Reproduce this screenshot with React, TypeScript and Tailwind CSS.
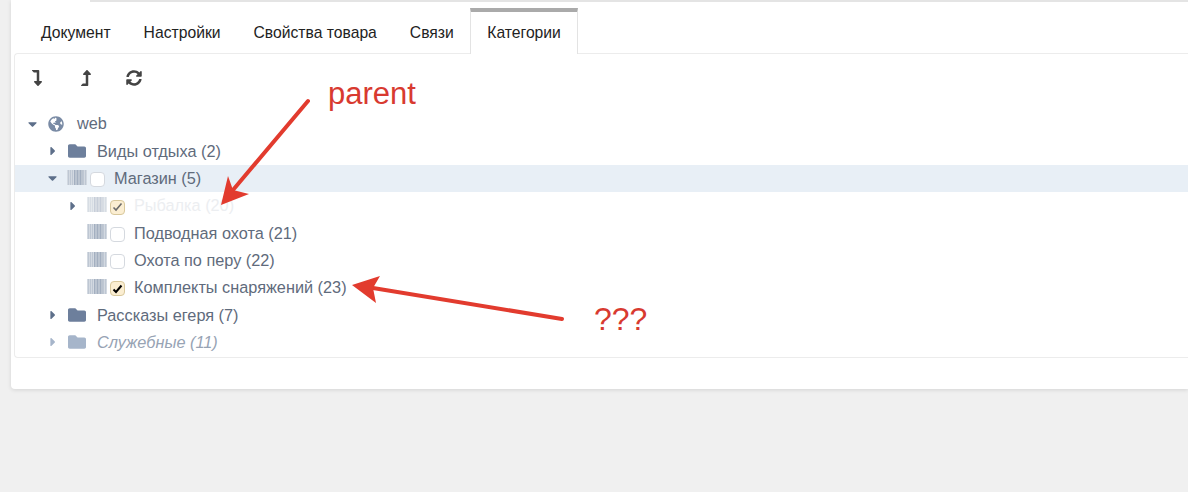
import React from "react";
import {
  FaCaretDown,
  FaCaretRight,
  FaFolder,
  FaGlobeAmericas,
  FaLevelDownAlt,
  FaLevelUpAlt,
  FaSyncAlt,
} from "react-icons/fa";

const tabs = ["Документ", "Настройки", "Свойства товара", "Связи", "Категории"];

const Barcode: React.FC<{ faded?: boolean }> = ({ faded }) => (
  <svg width="20" height="15" viewBox="0 0 20 15" className={`-mt-[2px] shrink-0 ${faded ? "opacity-60" : ""}`}>
    <rect width="20" height="15" fill="#d3d9e1" />
    {[1, 3, 5, 7, 8.5, 10, 11.5, 13, 14.5, 16, 18].map((x, i) => (
      <rect key={i} x={x} width="1" height="15" fill={i > 2 && i < 9 ? "#a3afc0" : "#bec7d3"} />
    ))}
  </svg>
);

const Check: React.FC<{ checked?: boolean; faded?: boolean }> = ({ checked, faded }) => (
  <span
    className={`mt-[3px] flex h-[15px] w-[15px] shrink-0 items-center justify-center rounded-[4px] border ${
      checked ? "border-[#d8c89c] bg-[#fbeed2]" : "border-[#d5d9df] bg-white"
    }`}
  >
    {checked && (
      <svg width="11" height="10" viewBox="0 0 11 10">
        <path
          d="M1.5 5.5 4 8l5.5-6.5"
          fill="none"
          stroke={faded ? "#6b6b6b" : "#000"}
          strokeWidth={faded ? 1.6 : 2}
        />
      </svg>
    )}
  </span>
);

const Row: React.FC<{ pl: string; className?: string; children: React.ReactNode }> = ({ pl, className, children }) => (
  <div className={`flex h-[27.3px] items-center ${pl} ${className ?? ""}`}>{children}</div>
);

const FolderRow: React.FC<{ label: string; muted?: boolean }> = ({ label, muted }) => (
  <Row pl="pl-[34px]">
    <FaCaretRight className={`w-[8px] shrink-0 text-[14px] ${muted ? "text-[#a6b5ca]" : "text-[#5d6f8a]"}`} />
    <FaFolder className={`ml-[11px] shrink-0 text-[18px] ${muted ? "text-[#a6b5ca]" : "text-[#6d7f9c]"}`} />
    <span className={`ml-[11px] ${muted ? "italic text-[#97a3b4]" : ""}`}>{label}</span>
  </Row>
);

const CategoryRow: React.FC<{ label: string; checked?: boolean }> = ({ label, checked }) => (
  <Row pl="pl-[72px]">
    <Barcode />
    <span className="ml-[3px]">
      <Check checked={checked} />
    </span>
    <span className="ml-[9px]">{label}</span>
  </Row>
);

export default function App() {
  return (
    <div className="relative h-[492px] w-[1188px] overflow-hidden bg-[#f0f0f0] font-['Liberation_Sans',Arial,sans-serif] text-[16.3px]">
      <div className="ml-[11px] h-[389px] rounded-bl-[4px] bg-white shadow-[0_1px_4px_rgba(0,0,0,0.12)]">
        <div className="ml-[79px] h-[2px] bg-[#e4e4e4]" />

        {/* tabs */}
        <div className="flex h-[51px] items-end pl-[13.5px] text-[15.7px] text-[#222]">
          {tabs.map((tab) =>
            tab === "Категории" ? (
              <div
                key={tab}
                className="relative -mb-px flex h-[46px] items-center border-x border-x-[#e3e3e3] border-t-4 border-t-[#aaaaaa] bg-white px-4 pb-[1px]"
              >
                {tab}
              </div>
            ) : (
              <div key={tab} className="flex h-[45px] items-center px-[16.5px] pt-[5px]">
                {tab}
              </div>
            ),
          )}
        </div>

        {/* panel */}
        <div className="ml-[3px] h-[305px] rounded-l-[4px] border-y border-l border-[#ececec] text-[#5f6b7c]">
          <div className="flex h-[56px] items-start pt-[16px] text-[#444]">
            <FaLevelDownAlt className="ml-[14px] text-[16px]" />
            <FaLevelUpAlt className="ml-[33px] text-[16px]" />
            <FaSyncAlt className="ml-[32px] text-[16px]" />
          </div>

          <Row pl="pl-[12px]">
            <FaCaretDown className="w-[11px] shrink-0 text-[14px] text-[#5d6f8a]" />
            <FaGlobeAmericas className="ml-[10px] shrink-0 text-[16px] text-[#7a8ba5]" />
            <span className="ml-[13px]">web</span>
          </Row>
          <FolderRow label="Виды отдыха (2)" />
          <Row pl="pl-[32px]" className="bg-[#e8eff6]">
            <FaCaretDown className="w-[11px] shrink-0 text-[14px] text-[#5d6f8a]" />
            <span className="ml-[9px]">
              <Barcode />
            </span>
            <span className="ml-[3px]">
              <Check />
            </span>
            <span className="ml-[9px]">Магазин (5)</span>
          </Row>
          <Row pl="pl-[54px]">
            <FaCaretRight className="w-[8px] shrink-0 text-[14px] text-[#5d6f8a]" />
            <span className="ml-[10px]">
              <Barcode faded />
            </span>
            <span className="ml-[3px]">
              <Check checked faded />
            </span>
            <span className="ml-[9px] text-[#eceef1]">Рыбалка (20)</span>
          </Row>
          <CategoryRow label="Подводная охота (21)" />
          <CategoryRow label="Охота по перу (22)" />
          <CategoryRow label="Комплекты снаряжений (23)" checked />
          <FolderRow label="Рассказы егеря (7)" />
          <FolderRow label="Служебные (11)" muted />
        </div>
      </div>

      {/* annotations drawn over the screenshot */}
      <span className="absolute left-[328px] top-[76px] text-[31px] leading-[36px] text-[#d83a30]">parent</span>
      <span className="absolute left-[594px] top-[301px] text-[32px] leading-[36px] text-[#d83a30]">???</span>
      <svg className="absolute left-0 top-0" width="1188" height="492" viewBox="0 0 1188 492">
        <path d="M308 101 233 190" stroke="#e23b2e" strokeWidth="4" strokeLinecap="round" />
        <path d="M221 205 228 176 233 190 249 194Z" fill="#e23b2e" />
        <path d="M562 319 373 288" stroke="#e23b2e" strokeWidth="4" strokeLinecap="round" />
        <path d="M352 285 380 276 373 288 376 303Z" fill="#e23b2e" />
      </svg>
    </div>
  );
}
